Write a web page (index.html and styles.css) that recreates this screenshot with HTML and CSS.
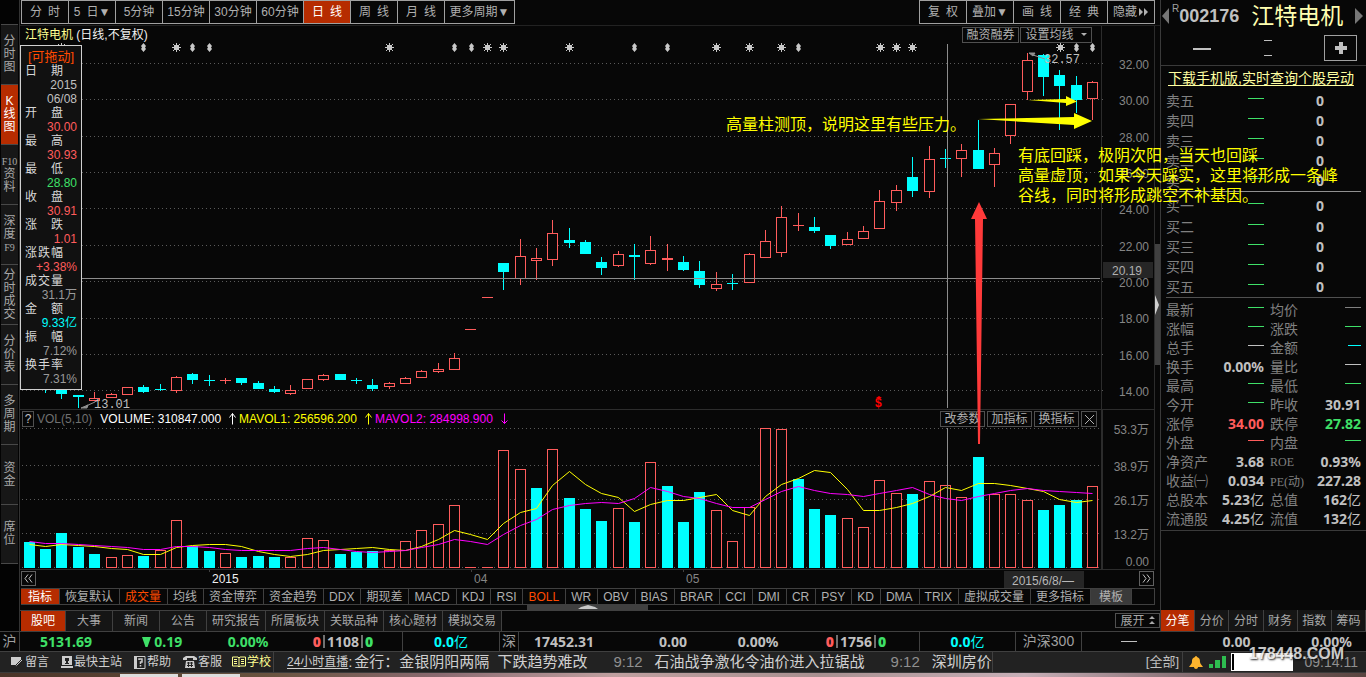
FILE: index.html
```html
<!DOCTYPE html>
<html lang="zh-CN">
<head>
<meta charset="utf-8">
<title>江特电机 日线</title>
<link rel="stylesheet" href="styles.css">
</head>
<body>
<div class="main">
  <nav class="side">
    <button>分<br>时<br>图</button>
    <button class="active">K<br>线<br>图</button>
    <button><small>F10</small><br>资<br>料</button>
    <button>深<br>度<br><small>F9</small></button>
    <button>分<br>时<br>成<br>交</button>
    <button>分<br>价<br>表</button>
    <button>多<br>周<br>期</button>
    <button>资<br>金</button>
    <button>席<br>位</button>
  </nav>

  <div class="centre">
    <div class="topbar">
      <div class="group">
        <button>分&ensp;时</button><button>5&ensp;日▼</button><button>5分钟</button><button>15分钟</button><button>30分钟</button><button>60分钟</button><button class="active">日&ensp;线</button><button>周&ensp;线</button><button>月&ensp;线</button><button class="more">更多周期▼</button>
      </div>
      <div class="group">
        <button>复&ensp;权</button><button>叠加▼</button><button>画&ensp;线</button><button>经&ensp;典</button><button class="hide">隐藏<svg width="10" height="8" viewBox="0 0 10 8"><path d="M0 0l4 4-4 4zM5 0l4 4-4 4z" fill="currentColor"/></svg></button>
      </div>
    </div>

    <div class="stage">
      <svg class="chart" id="chart" viewBox="20 26 1140 562" role="img" aria-label="K线与成交量"></svg>
      <div class="title"><span class="name">江特电机</span> (日线,不复权)</div>
      <div class="tools tools-price">
        <button>融资融券</button>
        <button class="ma">设置均线<svg width="6" height="4" viewBox="0 0 6 4"><path d="M0 0h6L3 3z" fill="currentColor"/></svg></button>
      </div>
      <div class="volhead">
        <button class="help">?</button>
        <span class="dim">VOL(5,10)</span>
        <span class="v0">VOLUME: 310847.000</span>
        <svg width="7" height="12" viewBox="0 0 7 12"><path d="M3.500 0.500v11M0.500 4.500l3-4 3 4" stroke="#fff" fill="none"/></svg>
        <span class="v1">MAVOL1: 256596.200</span>
        <svg width="7" height="12" viewBox="0 0 7 12"><path d="M3.500 0.500v11M0.500 4.500l3-4 3 4" stroke="#ff0" fill="none"/></svg>
        <span class="v2">MAVOL2: 284998.900</span>
        <svg width="7" height="12" viewBox="0 0 7 12"><path d="M3.500 0.500v10M0.500 7.500l3 3 3-3" stroke="#f0f" fill="none"/></svg>
      </div>
      <div class="tools tools-vol">
        <button>改参数</button><button>加指标</button><button>换指标</button><button class="close" aria-label="关闭"><svg width="11" height="11" viewBox="0 0 11 11"><path d="M1 1l9 9M10 1l-9 9" stroke="currentColor"/></svg></button>
      </div>
      <button class="page prev" aria-label="前翻"><svg width="9" height="9" viewBox="0 0 9 9"><path d="M4 0.500l-3 4 3 4M8 0.500l-3 4 3 4" stroke="currentColor" fill="none"/></svg></button>
      <button class="page next" aria-label="后翻"><svg width="9" height="9" viewBox="0 0 9 9"><path d="M1 0.500l3 4-3 4M5 0.500l3 4-3 4" stroke="currentColor" fill="none"/></svg></button>

      <svg class="arrows" viewBox="20 26 1140 562" aria-hidden="true">
        <path d="M1028 100L1066 99V96L1077 101.500 1066 106V103z" fill="#ff0"/>
        <path d="M978 119L1074 117V113L1092 121 1074 129V125z" fill="#ff0"/>
        <path d="M979 202L987 219H983L980 444H978L975 219H971z" fill="#ff3a3a"/>
      </svg>
      <p class="note note-left">高量柱测顶，说明这里有些压力。</p>
      <p class="note note-right">有底回踩，极阴次阳，当天也回踩<br>高量虚顶，如果今天踩实，这里将形成一条峰<br>谷线，同时将形成跳空不补基因。</p>

      <dl class="info">
        <dt class="drag">[可拖动]</dt>
        <dt>日 期</dt><dd>2015</dd><dd>06/08</dd>
        <dt>开 盘</dt><dd class="red">30.00</dd>
        <dt>最 高</dt><dd class="red">30.93</dd>
        <dt>最 低</dt><dd class="green">28.80</dd>
        <dt>收 盘</dt><dd class="red">30.91</dd>
        <dt>涨 跌</dt><dd class="red">1.01</dd>
        <dt>涨跌幅</dt><dd class="red">+3.38%</dd>
        <dt>成交量</dt><dd class="dim2">31.1万</dd>
        <dt>金 额</dt><dd class="cyan">9.33亿</dd>
        <dt>振 幅</dt><dd class="dim2">7.12%</dd>
        <dt>换手率</dt><dd class="dim2">7.31%</dd>
      </dl>
    </div>

    <div class="indicators">
      <button class="active">指标</button><button>恢复默认</button><button class="on">成交量</button><button>均线</button><button>资金博弈</button><button>资金趋势</button><button>DDX</button><button>期现差</button><button>MACD</button><button>KDJ</button><button>RSI</button><button class="on">BOLL</button><button>WR</button><button>OBV</button><button>BIAS</button><button>BRAR</button><button>CCI</button><button>DMI</button><button>CR</button><button>PSY</button><button>KD</button><button>DMA</button><button>TRIX</button><button>虚拟成交量</button><button>更多指标</button><button class="tpl">模板</button>
    </div>
    <div class="splitter"><span><svg width="20" height="4" viewBox="0 0 20 4"><path d="M0 4L3 2 10 0l7 2 3 2z" fill="#c8c8c8"/></svg></span></div>
    <div class="tabs">
      <button class="active">股吧</button><button>大事</button><button>新闻</button><button>公告</button><button class="wide">研究报告</button><button class="wide">所属板块</button><button class="wide">关联品种</button><button class="wide">核心题材</button><button class="wide">模拟交易</button>
      <button class="expand">展开<svg width="6" height="9" viewBox="0 0 6 9"><path d="M3 0l3 3H0zM3 5l3 3H0z" fill="currentColor"/></svg></button>
    </div>
  </div>

  <aside class="quote">
    <header>
      <svg width="7" height="16" viewBox="0 0 7 16"><path d="M7 0v16L0 8z" fill="#777"/></svg>
      <sup>R</sup><strong>002176</strong><h1>江特电机</h1>
      <svg width="8" height="16" viewBox="0 0 8 16"><path d="M0 0v16l8-8z" fill="#777"/></svg>
    </header>
    <div class="last">
      <span class="big"><i class="dash"></i></span>
      <span class="pair"><i class="dash"></i><i class="dash"></i></span>
      <button aria-label="加自选"><svg width="12" height="12" viewBox="0 0 12 12"><path d="M6 0v12M0 6h12" stroke="#c0c0c0" stroke-width="4"/></svg></button>
    </div>
    <a class="dl" href="#">下载手机版,实时查询个股异动</a>
    <table class="book">
      <tr><th>卖五</th><td><i class="dash green"></i></td><td>0</td></tr>
      <tr><th>卖四</th><td><i class="dash green"></i></td><td>0</td></tr>
      <tr><th>卖三</th><td><i class="dash green"></i></td><td>0</td></tr>
      <tr><th>卖二</th><td><i class="dash green"></i></td><td>0</td></tr>
      <tr><th>卖一</th><td><i class="dash green"></i></td><td>0</td></tr>
    </table>
    <table class="book bids">
      <tr><th>买一</th><td><i class="dash green"></i></td><td>0</td></tr>
      <tr><th>买二</th><td><i class="dash green"></i></td><td>0</td></tr>
      <tr><th>买三</th><td><i class="dash green"></i></td><td>0</td></tr>
      <tr><th>买四</th><td><i class="dash green"></i></td><td>0</td></tr>
      <tr><th>买五</th><td><i class="dash green"></i></td><td>0</td></tr>
    </table>
    <table class="stats">
      <tr><th>最新</th><td><i class="dash green"></i></td><th>均价</th><td><i class="dash grey"></i></td></tr>
      <tr><th>涨幅</th><td><i class="dash green"></i></td><th>涨跌</th><td><i class="dash green"></i></td></tr>
      <tr><th>总手</th><td><i class="dash"></i></td><th>金额</th><td><i class="dash cyan short"></i></td></tr>
      <tr><th>换手</th><td>0.00%</td><th>量比</th><td><i class="dash"></i></td></tr>
      <tr><th>最高</th><td><i class="dash green"></i></td><th>最低</th><td><i class="dash green"></i></td></tr>
      <tr><th>今开</th><td><i class="dash green"></i></td><th>昨收</th><td>30.91</td></tr>
      <tr><th>涨停</th><td class="red">34.00</td><th>跌停</th><td class="green">27.82</td></tr>
      <tr><th>外盘</th><td><i class="dash red"></i></td><th>内盘</th><td><i class="dash green"></i></td></tr>
      <tr><th>净资产</th><td>3.68</td><th><small>ROE</small></th><td>0.93%</td></tr>
      <tr><th>收益㈠</th><td>0.034</td><th><small>PE(动)</small></th><td>227.28</td></tr>
      <tr><th>总股本</th><td>5.23<b>亿</b></td><th>总值</th><td>162<b>亿</b></td></tr>
      <tr><th>流通股</th><td>4.25<b>亿</b></td><th>流值</th><td>132<b>亿</b></td></tr>
    </table>
    <hr>
    <div class="qtabs">
      <button class="active">分笔</button><button>分价</button><button>分时</button><button>财务</button><button>指数</button><button>筹码</button>
    </div>
  </aside>
</div>

<div class="status">
  <span class="mkt">沪</span>
  <span class="green">5131.69</span><span class="green"><svg width="9" height="10" viewBox="0 0 9 10"><path d="M0 0h9L5.500 10h-2z" fill="currentColor"/></svg> 0.19</span><span class="green">0.00%</span><span class="line"><b class="red">0</b><i></i>1108<i></i><b class="green">0</b></span><span class="cyan line">0.0<em>亿</em></span>
  <span class="mkt">深</span>
  <span>17452.31</span><span>0.00</span><span>0.00%</span><span class="line late"><b class="red">0</b><i></i>1756<i></i><b class="green">0</b></span><span class="cyan line">0.0<em>亿</em></span>
  <span class="mkt">沪深300</span>
  <span><u class="dash"></u></span><span>0.00</span><span>0.00%</span>
</div>

<footer class="ticker">
  <div class="links">
    <button><svg width="13" height="12" viewBox="0 0 13 12"><path d="M0 1h10v3L6 9 0 9z" fill="#ccc"/><path d="M12 4L6 10l-2 1 1-2 6-6z" fill="#ccc" stroke="#222"/></svg>留言</button>
    <button><svg width="12" height="12" viewBox="0 0 12 12"><path d="M1 0h10v9H1zM0 10h12v2H0z" fill="#ccc"/><path d="M4 2h4v3H7v2h1v1H4V7h1V5H4z" fill="#222"/></svg>最快主站</button>
    <button><svg width="12" height="13" viewBox="0 0 12 13"><path d="M0 0h3v13H0z" fill="#ccc"/><path d="M1 .5h10v12H1z" fill="none" stroke="#ccc"/><path d="M5 4V3h3v3H6.500v2M6.500 9v1.500" fill="none" stroke="#ccc" stroke-width="1.500"/></svg>帮助</button>
    <button><svg width="14" height="12" viewBox="0 0 14 12"><path d="M0 4V2l3-2h8l3 2v2h-4V2H4v2z" fill="#ccc"/><path d="M3 5h8l1 7H2z" fill="#ccc"/><path d="M4 7h6M4 9.500h6M5.500 6v5M8.500 6v5" stroke="#222"/></svg>客服</button>
    <button class="school"><svg width="14" height="12" viewBox="0 0 14 12"><path d="M.5 1H6l1 1 1-1h5.500v9H8l-1 1-1-1H.5zM7 2v9M2 3.500h3M2 5.500h3M2 7.500h3M9 3.500h3M9 5.500h3M9 7.500h3" fill="none" stroke="currentColor"/></svg>学校</button>
  </div>
  <div class="news">
    <a class="live" href="#">24小时直播</a><span class="colon">:</span>
    <span class="n1">金行：金银阴阳两隔</span><span>下跌趋势难改</span><time>9:12</time><span>石油战争激化令油价进入拉锯战</span><time>9:12</time><span class="cut">深圳房价</span>
  </div>
  <button class="all">[全部]</button>
  <div class="tray">
    <svg width="14" height="13" viewBox="0 0 14 13"><path d="M7 0c1 0 1 1 1 1 3 1 3 3 3 5 0 2 2 3 3 5H9c0 1-1 2-2 2s-2-1-2-2H0c1-2 3-3 3-5 0-2 0-4 3-5 0 0 0-1 1-1z" fill="#ffb52e"/></svg>
    <svg width="17" height="12" viewBox="0 0 17 12"><path d="M0 8h4v4H0zM6 4h5v8H6zM13 0h4v12h-4z" fill="#2ebd50"/></svg>
    <input type="text" aria-label="搜索">
    <time>09:14:11</time>
  </div>
  <span class="mark">178448.COM</span>
</footer>
<div class="taskbar"><i></i><i></i></div>
<script src="chart.js"></script>
</body>
</html>
```
FILE: styles.css
```css
* { box-sizing: border-box; }
html { background: #070707; }
body {
  margin: 0;
  min-height: 100vh;
  display: flex;
  flex-direction: column;
  background: #070707;
  color: #c0c0c0;
  font: 12px/16px "Liberation Sans", "Noto Sans CJK SC", sans-serif;
  overflow-x: hidden;
}
button {
  margin: 0;
  padding: 0;
  border: 0;
  border-radius: 0;
  background: none;
  color: inherit;
  font: inherit;
  white-space: nowrap;
}
svg { display: block; flex: none; }
p, dl, dd, h1 { margin: 0; }
.red { color: #ff5c5c; }
.green { color: #3fe068; }
.cyan { color: #00ffff; }
.grey { color: #808080; }
.dim { color: #707070; }
.dim2 { color: #9a9a9a; }
i.dash, u.dash {
  display: inline-block;
  width: 16px;
  height: 1px;
  background: currentColor;
  vertical-align: 7px;
}
i.dash.short { width: 13px; }
button.active { background: #b62c00; color: #fff; }

.main { display: flex; flex: 1; min-height: 631px; }

/* left navigation */
.side {
  width: 20px;
  padding: 24px 1px 0 1px;
  border-right: 1px solid #333;
  background: #030303;
  display: flex;
  flex-direction: column;
  flex: none;
}
.side button {
  height: 60px;
  line-height: 13px;
  color: #a8a8a8;
  background: #171717;
  border-top: 1px solid #484848;
  white-space: normal;
}
.side button.active { background: #b62c00; color: #fff; }
.side button:last-child { border-bottom: 1px solid #484848; }
.side small { font: 10px/13px "Liberation Serif", serif; }

.centre { flex: 1; min-width: 0; display: flex; flex-direction: column; }

/* period bar */
.topbar {
  display: flex;
  justify-content: space-between;
  height: 26px;
  padding: 0 5px 0 1px;
  border-bottom: 1px solid #222;
}
.group { display: flex; height: 24px; border: 1px solid #a0a0a0; }
.group button { width: 47px; border-left: 1px solid #a0a0a0; color: #b0b0b0; }
.group button:first-child { width: 46px; border-left: 0; }
.group .more { width: 70px; }
.group button.active { color: #fff; }
.group .hide { display: flex; align-items: center; justify-content: center; gap: 2px; }

/* chart */
.stage { position: relative; }
.chart { width: 100%; height: auto; }
.arrows { position: absolute; inset: 0; width: 100%; height: 100%; z-index: 1; }
.chart text { font: 12px "Liberation Sans", "Noto Sans CJK SC", sans-serif; fill: #858585; }
.title { position: absolute; left: 5px; top: 1px; color: #f0f0f0; }
.title .name { color: #ffff90; }
.tools { position: absolute; display: flex; color: #b0b0b0; }
.tools button { height: 16px; line-height: 14px; border: 1px solid #505050; background: #070707; }
.tools-price { right: 68px; top: 1px; gap: 1px; }
.tools-price button { width: 57px; }
.tools-price .ma { width: 72px; display: flex; align-items: center; justify-content: center; gap: 7px; }
.tools-vol { right: 63px; top: 385px; gap: 2px; }
.tools-vol button { width: 45px; }
.tools-vol .close { width: 16px; display: flex; align-items: center; justify-content: center; }
.volhead {
  position: absolute;
  left: 2px;
  top: 385px;
  display: flex;
  align-items: center;
  gap: 8px;
}
.help { width: 12px; height: 16px; line-height: 14px; border: 1px solid #505050; margin-right: -5px; }
.v0 { color: #fff; }
.v1, .v2 { margin-left: -5px; }
.v1 { color: #ff0; }
.v2 { color: #f0f; }
.page {
  position: absolute;
  bottom: 2px;
  width: 15px;
  height: 15px;
  border: 1px solid #606060;
  display: flex;
  align-items: center;
  justify-content: center;
}
.prev { left: 1px; }
.next { right: 6px; }
.note {
  position: absolute;
  z-index: 2;
  color: #ff0;
  font-size: 16px;
  line-height: 20px;
  white-space: nowrap;
}
.note-left { left: 706px; top: 89px; }
.note-right { left: 998px; top: 120px; }

.info {
  position: absolute;
  left: 0;
  top: 19px;
  width: 62px;
  padding: 4px 4px 3px;
  line-height: 14px;
  border: 1px solid #d0d0d0;
  background: #111;
  z-index: 1;
}
.info dt { width: 38px; color: #d8d8d8; text-align-last: justify; }
.info .drag { width: auto; color: #ff4a00; font-size: 13px; text-align-last: center; }
.info dd { text-align: right; }

/* indicator bar */
.indicators { display: flex; height: 17px; margin: 0 5px 0 1px; border: 1px solid #404040; border-left: 0; }
.indicators button { padding: 1px 6px 0 5px; line-height: 15px; border-right: 1px solid #404040; color: #b0b0b0; }
.indicators button.active { padding: 1px 7px 0; color: #fff; }
.indicators button.on { color: #ff4a00; }
.indicators .tpl { padding: 1px 8px 0; background: #3a3a3a; }
.splitter { height: 5px; display: flex; justify-content: center; padding-right: 5px; }
.splitter span { width: 121px; background: #404040; display: flex; justify-content: center; }

.tabs { display: flex; height: 21px; border-top: 1px solid #404040; padding-left: 1px; }
.tabs button { width: 47px; background: #151515; border-right: 1px solid #404040; color: #a8a8a8; }
.tabs button.active { width: 45px; background: #b62c00; color: #fff; }
.tabs .wide { width: 59px; }
.tabs .expand {
  display: flex;
  align-items: center;
  justify-content: center;
  gap: 4px;
  width: 45px;
  height: 15px;
  margin: 2px 0 0 auto;
  border: 1px solid #505050;
  background: none;
}

/* quote panel */
.quote {
  width: 206px;
  flex: none;
  display: flex;
  flex-direction: column;
  border-left: 1px solid #3a3a3a;
}
.quote header { display: flex; align-items: center; height: 31px; padding: 0 3px 0 1px; }
.quote sup { align-self: flex-start; line-height: 18px; margin-left: 3px; color: #a0a0a0; }
.quote strong { font-size: 18px; }
.quote h1 { margin: 0 auto; font-size: 23px; font-weight: 400; line-height: 30px; color: #ffffb0; }
.last {
  display: flex;
  align-items: center;
  height: 35px;
  padding: 0 9px 0 32px;
  border-bottom: 1px solid #3a3a3a;
}
.big i.dash { width: 18px; height: 2px; vertical-align: 2px; }
.pair { display: flex; flex-direction: column; gap: 14px; margin: 0 auto; }
.pair i.dash { width: 8px; }
.last button { width: 33px; height: 26px; border: 1px solid #a0a0a0; display: flex; align-items: center; justify-content: center; }
.dl { margin: 3px 0 4px 7px; font-size: 14px; line-height: 18px; color: #ffffa0; text-underline-offset: 2px; white-space: nowrap; }
.quote table { border-collapse: collapse; table-layout: fixed; margin: 0 5px; width: 195px; }
.quote th { padding: 0; font-weight: 400; font-size: 14px; color: #808080; text-align: left; white-space: nowrap; }
.quote td { padding: 0; font: bold 14px/18px "Noto Sans", "Noto Sans CJK SC", sans-serif; text-align: right; white-space: nowrap; }
.book tr { height: 20px; }
.book th { width: 42px; }
.book td { width: 56px; }
.book td:last-child { width: 97px; padding-right: 37px; }
.bids { border-top: 1px solid #909090; }
.bids tr:first-child { height: 25px; }
.bids tr:first-child th, .bids tr:first-child td { padding-top: 4px; }
.stats { border-top: 1px solid #505050; }
.stats tr { height: 19px; }
.stats tr:first-child { height: 22px; }
.stats tr:first-child th, .stats tr:first-child td { padding-top: 3px; }
.stats th:first-child { width: 48px; }
.stats td:nth-child(2) { width: 50px; }
.stats th:nth-child(3) { width: 44px; padding-left: 6px; }
.stats small { font: 12px "Liberation Serif", "Noto Sans CJK SC", serif; }
.quote hr { width: 100%; margin: 2px 0 0; border: 0; border-top: 1px solid #3a3a3a; }
.quote td b, .status em { font-weight: 400; font-style: normal; }
.qtabs { display: flex; height: 21px; margin-top: auto; }
.qtabs button { flex: 1; background: #151515; border-right: 1px solid #404040; color: #a8a8a8; }
.qtabs button.active { background: #b62c00; color: #fff; }

/* index row */
.status {
  display: grid;
  grid-template-columns: 20px 92fr 100fr 72fr 119fr 97fr 19px 90fr 128fr 42fr 141fr 96fr 66px 94fr 121fr 69fr;
  height: 21px;
  border-top: 1px solid #404040;
  border-bottom: 1px solid #404040;
  font: bold 14px/19px "Noto Sans", "Noto Sans CJK SC", sans-serif;
}
.status > span { display: flex; align-items: center; justify-content: center; white-space: pre; }
.status .mkt { font: 14px/19px "Liberation Sans", "Noto Sans CJK SC", sans-serif; color: #a0a0a0; border-right: 1px solid #404040; }
.status .line { border-right: 1px solid #404040; }
.status .late { padding-left: 14px; }
.status .line i { width: 2px; height: 13px; margin: 0 2px; background: #707070; }

/* ticker */
.ticker {
  position: relative;
  display: flex;
  align-items: center;
  height: 21px;
  padding-right: 8px;
  background: #222;
  border-bottom: 1px solid #3a3a3a;
  line-height: 20px;
}
.links { display: flex; gap: 12px; width: 274px; flex: none; padding-left: 11px; border-right: 1px solid #404040; }
.links button { display: flex; align-items: center; gap: 1px; color: #d0d0d0; }
.links .school { color: #ffff90; margin-left: -2px; }
.news { display: flex; align-items: center; flex: 1; min-width: 0; padding-left: 13px; font-size: 15px; color: #d0d0d0; white-space: nowrap; overflow: hidden; }
.live { font-size: 12px; color: inherit; text-underline-offset: 2px; }
.colon { width: 6px; }
.news .n1 { margin-right: 8px; }
.news time { margin: 0 12px 0 26px; color: #909090; }
.cut { border-right: 1px solid #404040; }
.all { padding-right: 3px; border-right: 1px solid #404040; color: #c0c0c0; font-size: 13px; }
.tray { display: flex; align-items: center; gap: 6px; padding-left: 6px; }
.tray input { width: 60px; height: 16px; padding: 0 2px; border: 0; border-radius: 0; background: #fff; border-left: 2px solid #000; outline: 1px solid #fff; }
.tray time { width: 60px; text-align: right; font-size: 14px; color: #909090; }
.mark {
  position: absolute;
  right: 22px;
  bottom: 6px;
  font: bold 16px/24px "Liberation Sans Narrow", "Liberation Sans", sans-serif;
  color: #e8e8e8;
  text-shadow: 1px 1px 2px #000;
  opacity: 0.85;
}
.taskbar {
  display: flex;
  gap: 4px;
  height: 4px;
  padding: 1px 0 0 120px;
  background: linear-gradient(90deg, #4a3428, #6a5440 20%, #8a6a70 32%, #c0a0a0 45%, #a89090 60%, #c8b0b8 75%, #80686c 88%, #5a4540);
}
.taskbar i { width: 58px; background: #ddd; }
```
FILE: chart.js
```js
(function () {
  var svg = document.getElementById('chart');
  var NS = 'http://www.w3.org/2000/svg';
  var RED = '#ff5c5c', CYAN = '#00ffff';

  function add(name, attrs, text) {
    var el = document.createElementNS(NS, name);
    for (var k in attrs) el.setAttribute(k, attrs[k]);
    if (text !== undefined) el.textContent = text;
    svg.appendChild(el);
    return el;
  }
  function box(x, y, w, h, fill) {
    add('rect', { x: x, y: y, width: w, height: h, fill: fill });
  }
  function label(x, y, text, style) {
    var el = add('text', { x: x, y: y }, text);
    if (style) el.setAttribute('style', style);
    return el;
  }
  function body(x, top, bottom, colour) {
    if (colour === CYAN || bottom - top < 2) box(x, top, 11, bottom - top, colour);
    else add('rect', { x: x + 0.5, y: top + 0.5, width: 10, height: bottom - top - 1, fill: '#070707', stroke: colour });
  }
  function left(i) { return Math.floor(24.2 + 16.36 * i + 0.001); }

  // frame and grid
  [63, 99, 136, 172, 208, 245, 281, 318, 354, 390, 428, 465, 499, 533, 567].forEach(function (y) {
    add('path', { d: 'M22 ' + (y + 0.5) + 'H1103', stroke: '#5a5a5a', 'stroke-dasharray': '1 3' });
  });
  box(1101, 26, 1, 383, '#2c2c2c');
  box(1101, 409, 2, 160, '#2c2c2c');
  box(1154, 26, 1, 543, '#2c2c2c');
  box(20, 409, 1135, 1, '#2c2c2c');
  box(20, 569, 1135, 1, '#2c2c2c');
  box(1155, 244, 5, 121, '#404040');
  add('path', { d: 'M1155 295l4 10-4 10z', fill: '#d0d0d0' });

  // per bar: colour, high, body top, body bottom, low, volume top
  var data = [
    ['c',380,382,388,390,542],['c',380,382,388,393,549],['c',383,385,394,399,533],['c',395,395,397,408,547],
    ['r',392,398,401,401,554],['r',393,394,398,398,557],['r',387,387,395,395,555],['c',385,387,392,393,556],
    ['c',384,389,390,391,550],['r',376,377,391,393,520],['c',373,374,380,384,546],['c',375,380,381,386,551],
    ['r',378,380,381,384,553],['c',378,378,383,385,557],['c',381,383,389,389,556],['c',386,389,392,393,557],
    ['r',385,390,394,395,557],['r',379,379,389,389,538],['r',374,375,380,381,540],['c',374,374,380,380,554],
    ['c',378,380,381,384,552],['c',379,385,389,391,551],['r',382,383,387,389,550],['r',377,378,384,384,541],
    ['r',370,371,378,378,530],['r',363,369,372,373,524],['r',353,358,370,370,505],['r',329,329,330,330,567],
    ['r',297,297,298,298,567],['c',263,263,272,290,450],['r',239,256,279,285,469],['r',248,258,261,280,488],
    ['r',220,233,260,266,449],['c',228,240,243,248,498],['c',240,242,254,254,509],['c',257,262,268,275,521],
    ['r',251,254,266,267,508],['c',244,255,257,280,522],['r',236,250,264,265,462],['r',244,258,260,271,486],
    ['c',256,262,270,271,522],['c',261,271,285,288,492],['r',272,284,289,291,510],['c',274,283,284,290,541],
    ['r',253,254,283,283,507],['r',230,241,258,258,428],['r',206,217,253,257,429],['r',213,225,226,231,479],
    ['c',217,227,231,233,509],['c',235,235,246,249,515],['r',232,239,245,245,518],['r',226,231,239,239,527],
    ['r',190,201,229,229,480],['r',185,190,203,211,493],['c',157,177,191,197,494],['r',146,159,192,198,481],
    ['c',149,158,159,168,485],['r',144,150,159,177,497],['c',120,150,169,169,457],['r',148,153,165,187,494],
    ['r',104,104,136,144,494],['r',53,60,92,100,500],['c',54,55,77,96,510],['c',70,75,86,130,505],
    ['c',76,85,100,113,500],['r',81,82,99,120,486]
  ];
  // bars whose volume colour differs from the candle colour
  var volume = { 4: CYAN, 8: RED, 29: RED, 31: CYAN, 39: CYAN, 43: RED, 47: CYAN, 56: RED };

  data.forEach(function (d, i) {
    var x = left(i), colour = d[0] === 'c' ? CYAN : RED;
    box(x + 5, d[1], 1, d[4] - d[1], colour);
    body(x, d[2], d[3], colour);
    body(x, d[5], 568, volume[i] || colour);
  });

  // moving averages of volume
  var ma5 = [544,546,544,545,546,548,549,554,554,547,545,544,544,546,551,554,556,554,550,549,548,547,549,550,546,539,530,534,539,523,512,508,485,471,484,493,497,511,504,500,500,497,494,510,515,496,484,478,470,472,489,510,510,507,503,496,487,490,483,483,485,488,491,499,502,500];
  var ma10 = [541,543,543,544,545,546,547,549,549,546,546,547,549,550,550,550,550,548,547,549,551,552,551,550,547,544,539,541,544,534,525,519,509,505,503,502,503,498,487,491,496,498,503,507,507,499,491,486,490,493,494,496,493,490,487,494,498,500,496,493,490,488,490,491,492,493];
  function line(values, colour) {
    add('polyline', {
      points: values.map(function (v, i) { return (left(i) + 5.5) + ',' + (v + 0.5); }).join(' '),
      fill: 'none', stroke: colour
    });
  }
  line(ma5, '#ffff00');
  line(ma10, '#ff00ff');

  // crosshair
  box(82, 278, 1018, 1, '#8c8c8c');
  box(947, 44, 1, 364, '#8c8c8c');
  box(947, 428, 1, 139, '#8c8c8c');

  // event markers
  [61, 176, 389, 487, 503, 569, 716, 749, 781, 880, 896, 912, 1060].forEach(function (x) {
    add('path', { d: 'M' + (x - 4) + ' 47.5h9M' + (x + 0.5) + ' 43v9M' + (x - 3) + ' 44l7 7M' + (x + 4) + ' 44l-7 7', stroke: '#c8c8c8' });
    box(x - 2, 45, 5, 5, '#c8c8c8');
  });
  [143, 192, 209, 454, 471, 634, 667, 798, 1076, 1092].forEach(function (x) {
    add('path', { d: 'M' + (x + 0.5) + ' 43l2.500 3-1 1.500 1 1.500-2.500 3-2.500-3 1-1.500-1-1.500z', fill: '#c8c8c8' });
  });

  // price and volume scales
  ['32.00', '30.00', '28.00', '26.00', '24.00', '22.00', '20.00', '18.00', '16.00', '14.00'].forEach(function (t, i) {
    label(1149, 69 + Math.round(i * 36.33), t, 'text-anchor:end');
  });
  [['53.3万', 434], ['38.9万', 471], ['26.1万', 505], ['13.2万', 539], ['0.00', 566]].forEach(function (v) {
    label(1149, v[1], v[0], 'text-anchor:end');
  });
  box(1103, 262, 50, 16, '#262626');
  label(1112, 275, '20.19', 'fill:#b0b0b0');

  // extreme price callouts
  add('path', { d: 'M1029 53l6 0-2 3zM1033 55l12 4M81 408l7-3-1 3zM86 406l9-4', stroke: '#909090', fill: '#909090' });
  label(1044, 63, '32.57', 'font:12px "Liberation Mono",monospace;fill:#c0c0c0');
  label(94, 408, '13.01', 'font:12px "Liberation Mono",monospace;fill:#c0c0c0');
  label(875, 407, '$', 'font:bold 12px "Liberation Sans";fill:#ff0000');
  add('path', { d: 'M876 398l3-2 3 2z', fill: '#ff0000' });

  // dates
  label(212, 583, '2015', 'fill:#f0f0f0');
  label(474, 583, '04');
  label(686, 583, '05');
  box(209, 570, 1, 2, '#404040');
  box(471, 570, 1, 2, '#404040');
  box(683, 570, 1, 2, '#404040');
  box(1004, 571, 80, 17, '#262626');
  label(1012, 585, '2015/6/8/—', 'fill:#b8b8b8');
})();
```
